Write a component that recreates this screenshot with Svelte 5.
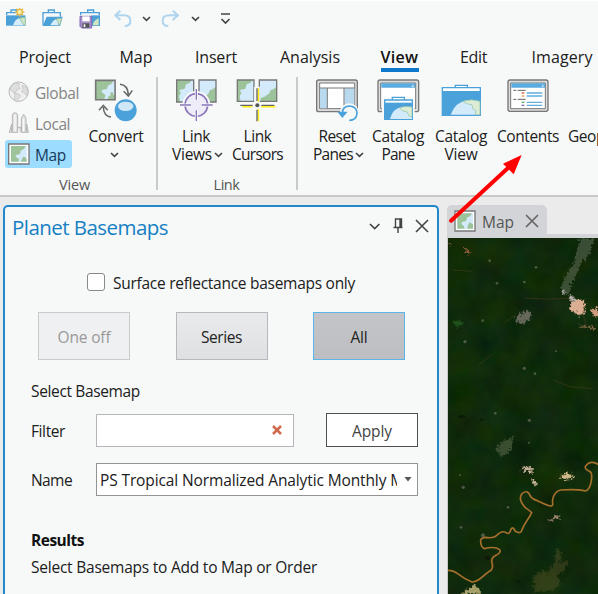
<script>
  const tabs = [
    ['Project', 53], ['Map', 34], ['Insert', 43], ['Analysis', 61],
    ['View', 39], ['Edit', 28], ['Imagery', 62]
  ];

  // Spreads the letters so that a label takes the given width,
  // less one pixel for the side bearings.
  function fit(node, width) {
    const natural = node.getBoundingClientRect().width;
    node.style.letterSpacing = `${(width - 1 - natural) / node.textContent.length}px`;
  }
</script>

{#snippet chevron()}
  <svg class="chev" viewBox="0 0 11 8"><path d="M2 2l3.5 3.3L9 2" /></svg>
{/snippet}

{#snippet greenMap(x, y, s)}
  <g transform="translate({x} {y}) scale({s})">
    <path d="M0 0h60v60H0z" fill="#d3eafb" />
    <path d="M0 0H55L50 10 38 17 35 27 22 29 17 33 23 40 30 45 29 52 24 60H0z" fill="#9cc39a" />
    <path d="M46 36l7 1 2 8 5 2v13H36l4-10 6-4z" fill="#9cc39a" />
    <path d="M0 0h60v60H0z" fill="none" stroke="#777" stroke-width="5" />
  </g>
{/snippet}

<div class="app">
  <div class="qat">
    <svg class="q" viewBox="15 24 66 66">
      <path d="M33 37v-7h17v7M20 45v-7h28" fill="none" stroke="#4ba0d8" stroke-width="4" />
      <path d="M18 46h58v31H18z" fill="#4ba0d8" />
      <path d="M39 76q6-20 21-22l14-2v24z" fill="#d8edfa" /><path d="M58 54l6 9 8 13h4V52z" fill="#cfe6c0" stroke="#78b497" stroke-width="2" />
      <g stroke="#e0b94c" stroke-width="4"><path d="M59 22v28M45 36h28M49 26l20 20M69 26L49 46" /><circle cx="59" cy="36" r="8" fill="#fff2a9" /></g>
    </svg>
    <svg class="q" viewBox="126 24 66 66">
      <path d="M145 37v-7h18v7M129 76V38h52v12" fill="none" stroke="#4ba0d8" stroke-width="4" />
      <path d="M140 50h48l-8 28h-52z" fill="#4ba0d8" />
      <path d="M151 76q7-16 20-20l14-2-6 22z" fill="#d8edfa" /><path d="M168 57l6 8 2 10h3l6-20z" fill="#cfe6c0" stroke="#78b497" stroke-width="2" />
    </svg>
    <svg class="q" viewBox="237 24 66 66">
      <path d="M263 37v-7h18v7M242 46v-8h56v8" fill="none" stroke="#4ba0d8" stroke-width="4" />
      <path d="M274 46h26v32h-26z" fill="#4ba0d8" /><path d="M278 76q2-14 18-21v21z" fill="#cfe6c0" />
      <path d="M240 49h35v35h-30l-5-5z" fill="#a58fc8" stroke="#8267b4" stroke-width="3" />
      <path d="M247 49h22v15h-22z" fill="#fff" /><path d="M247 70h21v13h-21z" fill="#555" /><path d="M251 73h5v8h-5z" fill="#fff" />
    </svg>
    <svg class="q undo" viewBox="339 24 66 66"><path d="M361 32l-15 14 15 14M347 46h24q20 0 20 16 0 16-17 16" /></svg>
    {@render chevron()}
    <svg class="q redo" viewBox="483 24 66 66"><path d="M518 32l16 14-16 14M533 46h-24q-21 0-21 16 0 16 17 16" /></svg>
    {@render chevron()}
    <svg class="more" viewBox="0 0 13 16"><path d="M2 3h9M2.500 8l4 4 4-4" /></svg>
  </div>

  <div class="tabs">
    {#each tabs as [name, width]}
      <div class="tab" class:active={name === 'View'}><span use:fit={width}>{name}</span></div>
    {/each}
  </div>

  <div class="ribbon">
    <div class="group view">
      <div class="row">
        <div class="smalls">
          <div class="small off">
            <svg viewBox="24 20 66 66">
              <circle cx="56" cy="52" r="29" fill="#f0f0f0" stroke="#b8b8b8" stroke-width="3" />
              <path d="M34 34l12-8 12 2-2 8 6 6-10 4-6 10-10-4-6-8zM44 56l14 4 4 6-8 8-2 8-8-4zM66 32l12 6 6 12-4 14-8-8-8-4 6-8z" fill="#dedede" stroke="#bcbcbc" stroke-width="2" />
            </svg><span use:fit={45}>Global</span>
          </div>
          <div class="small off">
            <svg viewBox="24 114 66 66">
              <path d="M28 175l7-25v25zM37 175v-52l4-6h8l4 6v52zM64 175v-42l7-12 7 12v42zM80 150l5 25h-5zM53 160h10v15" fill="#e2e2e2" stroke="#b5b5b5" stroke-width="3" />
              <path d="M45 122v50M71 134v38" stroke="#fff" stroke-width="3" />
            </svg><span use:fit={36}>Local</span>
          </div>
          <div class="small on">
            <svg viewBox="24 207 66 66">
              <path d="M26 210h61v60H26z" fill="#fff" stroke="#777" stroke-width="4" />
              <path d="M33 216h47v47H33z" fill="#d3eafb" />
              <path d="M33 216h44l-5 8-10 6-2 10-11 3-3 5 8 5 4 5-4 5H33zM70 248l6 2 4 6v7H62l4-8z" fill="#9cc39a" />
            </svg><span use:fit={32}>Map</span>
          </div>
        </div>
        <div class="big convert">
          <svg viewBox="282 12 132 132">
            {@render greenMap(287, 19, 0.97)}
            <path d="M360 31q23 2 25 30M371 52l14 14 12-17M333 129q-22-2-23-30M297 109l13-15 13 15" fill="none" stroke="#666" stroke-width="4.500" />
            <circle cx="377" cy="109" r="33" fill="#4ba1da" /><ellipse cx="377" cy="97" rx="23" ry="14" fill="#cfe7f7" />
          </svg>
          <span use:fit={56}>Convert</span>
          {@render chevron()}
        </div>
      </div>
      <div class="caption"><span use:fit={32}>View</span></div>
    </div>

    <div class="group link">
      <div class="row">
        <div class="big views">
          <svg viewBox="42 12 132 132">
            <path d="M50 18h51v66H50zM117 18h51v66h-51z" fill="#d3eafb" />
            <path d="M50 18h44l-4 8-12 5-4 13-16 4 4 10-5 8 4 18H50zM168 38l-10 8-8 2-4 10-10 10 4 16h28z" fill="#9cc39a" />
            <path d="M50 18h51v66H50zM117 18h51v66h-51z" fill="none" stroke="#777" stroke-width="4" />
            <circle cx="109" cy="93" r="42" fill="#f7f9f8" />
            <circle cx="109" cy="93" r="34" fill="#eeecf8" stroke="#8976b9" stroke-width="5" />
            <path d="M109 45v33M109 108v33M60 93h34M124 93h34" stroke="#f7f9f8" stroke-width="9" />
            <path d="M109 45v32M109 109v32M60 93h33M125 93h33" stroke="#8976b9" stroke-width="4" />
          </svg>
          <span use:fit={29}>Link</span>
          <div class="line"><span use:fit={41}>Views</span>{@render chevron()}</div>
        </div>
        <div class="big cursors">
          <svg viewBox="226 12 132 132">
            <path d="M230 18h50v64h-50zM296 18h52v64h-52z" fill="#d3eafb" />
            <path d="M230 18h44l-4 8-12 5-4 13-16 4 4 10-5 8 3 16h-10zM348 38l-10 8-8 2-4 10-14 10-12 4v10h48z" fill="#9cc39a" />
            <path d="M230 18h50v64h-50zM296 18h52v64h-52z" fill="none" stroke="#777" stroke-width="4" />
            <path d="M289 38v106M232 95h119" stroke="#f7f9f8" stroke-width="17" />
            <path d="M293 43v40M293 105v37M245 98h30M302 98h42" stroke="#ffef16" stroke-width="5" />
            <path d="M289 43v38M289 107v35M239 94h37M302 94h39" stroke="#666" stroke-width="4" />
            <circle cx="290" cy="94" r="6" fill="#555" />
          </svg>
          <span use:fit={29}>Link</span>
          <span use:fit={52}>Cursors</span>
        </div>
      </div>
      <div class="caption"><span use:fit={27}>Link</span></div>
    </div>

    <div class="group panes">
      <div class="row">
        <div class="big reset">
          <svg viewBox="33 12 132 132">
            <rect x="38" y="18" width="122" height="95" rx="6" fill="#ddd" stroke="#777" stroke-width="4" />
            <path d="M47 27h105v77H47z" fill="#fff" stroke="#777" stroke-width="3" />
            <path d="M48 43h21v60H48zM121 43h30v60h-30z" fill="#b9d9ef" />
            <path d="M47 42h105M70 42v62M120 42v62" stroke="#777" stroke-width="3" />
            <circle cx="136" cy="117" r="29" fill="#f7f9f8" />
            <path d="M115 118q0-22 22-22 22 2 22 22-2 21-23 21" fill="none" stroke="#4ba1da" stroke-width="5" />
            <path d="M100 113l15 19 16-19z" fill="#4ba1da" />
          </svg>
          <span use:fit={38}>Reset</span>
          <div class="line"><span use:fit={41}>Panes</span>{@render chevron()}</div>
        </div>
        <div class="big pane">
          <svg viewBox="216 12 132 132">
            <rect x="222" y="18" width="122" height="95" rx="6" fill="#ddd" stroke="#777" stroke-width="4" />
            <path d="M230 27h105v77H230z" fill="#fff" stroke="#777" stroke-width="3" />
            <path d="M232 28h102v13H232z" fill="#5aabe0" /><path d="M327 30l2 9h-6z" fill="#d8edfa" />
            <path d="M234 70h98v72h-98z" fill="#f7f9f8" />
            <path d="M265 78v-8h36v8M242 88V78h83v10" fill="#fff" stroke="#4ba1da" stroke-width="4" />
            <path d="M240 86h87v52h-87z" fill="#4ba1da" />
            <path d="M258 135q8-32 36-35l30-2v37z" fill="#d3eafb" />
            <path d="M286 101l10 10 14 3 5 12 9 3v-30q-20-4-38 2z" fill="#dcecd5" stroke="#8ac2a4" stroke-width="2" />
          </svg>
          <span use:fit={53}>Catalog</span>
          <span use:fit={34}>Pane</span>
        </div>
        <div class="big cview">
          <svg viewBox="-3 12 132 132">
            <path d="M46 40v-6h36v6M7 52V41h114v11" fill="#fff" stroke="#4ba1da" stroke-width="4" />
            <path d="M5 51h118v75H5z" fill="#4ba1da" />
            <path d="M32 122q14-38 50-44l38 4v40z" fill="#d3eafb" />
            <path d="M68 82l15 8 13 2 2 12 10 6-2 12h14V82q-26-9-52 0z" fill="#dcecd5" stroke="#8ac2a4" stroke-width="2" />
          </svg>
          <span use:fit={53}>Catalog</span>
          <span use:fit={34}>View</span>
        </div>
        <div class="big contents">
          <svg viewBox="198 12 132 132">
            <rect x="204" y="18" width="120" height="94" rx="6" fill="#ddd" stroke="#777" stroke-width="4" />
            <path d="M212 27h104v77H212z" fill="#fff" stroke="#777" stroke-width="3" />
            <path d="M214 28h101v13H214z" fill="#5aabe0" /><path d="M309 30l2 8h-6z" fill="#d8edfa" />
            <path d="M220 49h9M233 49h24M220 76h9M233 76h24" stroke="#666" stroke-width="3" />
            <path d="M260 57h47M260 66h47M260 85h47M260 94h47" stroke="#62aee0" stroke-width="4" />
            <path d="M245 57h8" stroke="#d65a39" stroke-width="4" /><path d="M245 66h8" stroke="#e49b4b" stroke-width="4" />
            <path d="M245 85h8" stroke="#59a868" stroke-width="4" /><path d="M245 94h8" stroke="#7c68b8" stroke-width="4" />
          </svg>
          <span use:fit={63}>Contents</span>
        </div>
        <div class="big geo"><span use:fit={38}>Geop</span></div>
      </div>
    </div>
  </div>

  <div class="work">
    <section class="dock">
      <header>
        <h1><span use:fit={157}>Planet Basemaps</span></h1>
        <svg class="tools" viewBox="0 0 66 20">
          <path d="M4 8l4.700 4.600L13.400 8" stroke-width="1.600" />
          <path d="M29.500 3h6v8.500h-6zM27.500 11.500h9M32 11.500v5.500" stroke-width="1.400" /><path d="M34.500 3v8" stroke-width="2.400" />
          <path d="M50 4l12 12M62 4L50 16" stroke-width="1.600" />
        </svg>
      </header>
      <label class="check"><i></i><span use:fit={243}>Surface reflectance basemaps only</span></label>
      <div class="modes">
        <button class="dis"><span use:fit={54}>One off</span></button>
        <button><span use:fit={42}>Series</span></button>
        <button class="sel"><span use:fit={18}>All</span></button>
      </div>
      <div class="select"><span use:fit={110}>Select Basemap</span></div>
      <div class="field filter">
        <div class="key"><span use:fit={35}>Filter</span></div>
        <div class="input"><svg viewBox="0 0 10 10"><path d="M1 1l8 8M9 1L1 9" /></svg></div>
        <button class="apply"><span use:fit={41}>Apply</span></button>
      </div>
      <div class="field name">
        <div class="key"><span use:fit={42}>Name</span></div>
        <div class="combo">
          <div class="value"><span use:fit={305}>PS Tropical Normalized Analytic Monthly M</span></div>
          <svg viewBox="0 0 8 5"><path d="M.5 0h7L4 4.500z" /></svg>
        </div>
      </div>
      <div class="results"><b use:fit={54}>Results</b></div>
      <div class="hint"><span use:fit={287}>Select Basemaps to Add to Map or Order</span></div>
    </section>

    <section class="doc">
      <div class="doctab">
        <svg class="mapicon" viewBox="43 407 66 66">
          <path d="M46 410h60v60H46z" fill="#fff" stroke="#777" stroke-width="4" />
          <path d="M53 417h47v46H53z" fill="#d3eafb" />
          <path d="M53 417h44l-5 8-10 5-3 10-12 3-2 6 7 5 3 9H53zM90 444l10 6v13H83l2-10z" fill="#9cc39a" />
        </svg>
        <span use:fit={33}>Map</span>
        <svg class="x" viewBox="0 0 14 14"><path d="M1 1l12 12M13 1L1 13" /></svg>
      </div>
      <div class="map">
        <svg width="150" height="356" viewBox="0 0 150 356">
          <defs>
            <filter id="forest" x="0" y="0" width="100%" height="100%" color-interpolation-filters="sRGB">
              <feTurbulence type="fractalNoise" baseFrequency=".035" numOctaves="6" seed="8" />
              <feColorMatrix values=".09 0 0 0 .015  .04 .08 0 0 .105  0 0 .09 0 -.005  0 0 0 0 1" />
            </filter>
            <filter id="rough" x="-5%" y="-5%" width="110%" height="110%" color-interpolation-filters="sRGB">
              <feTurbulence type="fractalNoise" baseFrequency=".12" numOctaves="2" seed="3" result="n" />
              <feDisplacementMap in="SourceGraphic" in2="n" scale="24" xChannelSelector="R" yChannelSelector="G" />
              <feGaussianBlur stdDeviation="2" />
            </filter>
          </defs>
          <rect width="150" height="356" fill="#0d260b" />
          <rect width="150" height="356" filter="url(#forest)" />
          <g transform="translate(-8 -8) scale(.33333)">
            <g filter="url(#rough)">
              <path d="M420 25h42l-8 38-34 42-22 52-16 38-22-10 20-56 20-26z" fill="#60705a" opacity=".55" />
              <path d="M230 260l25-18 16 4 4 18-26 16-22-6z" fill="#77736a" opacity=".85" />
              <path d="M166 660l20-25 34-14-8 38-26 24z" fill="#526344" opacity=".65" />
              <path d="M390 220l18-12 24 2 6 18-8 8 4 16-20 4-14-14-12-6z" fill="#dcae91" />
              <path d="M388 190l10 6 10 16-10 4-12-12zM360 186l10-8 8 10-8 4z" fill="#b4aca9" />
              <path d="M454 236l20-4v32l-16-6z" fill="#cf9c7f" />
              <path d="M412 284l24 6 24-2 6 12-10-4-20-2-24-2z" fill="#836b49" />
              <path d="M245 714l20-4 16 6-8 16-20-10zM272 744l12 6 6 18-12-6z" fill="#c6b298" />
              <path d="M360 740l18-8 4-10 6 12 16 2-8 10-22 2z" fill="#d1b78a" />
              <path d="M324 876l14-14 20-10 2 12-22 6z" fill="#a1886e" />
              <path d="M82 1078l18-14 20 12v16H60z" fill="#a7a06a" />
              <path d="M72 55l16 4 2 16-8-4zM25 35l10 3-5 12z" fill="#905e3d" />
              <path d="M280 1040l30-20 10 14 20-34 10-50 16 20-8 30 26-12-6 26-24 24 6 30-30 14-44 6z" fill="#6d6037" opacity=".35" />
              <path d="M35 270l30 4 4 14-20 2z" fill="#245e20" opacity=".8" />
            </g>
            <path d="M252 204q70 6 136 1M190 280l38-26M116 405l40-32M340 450l50 20 70 6M40 120l58 4M430 255l10 35" fill="none" stroke="#704b2a" stroke-width="2" opacity=".5" />
            <g fill="#8b8781" opacity=".5"><circle cx="149" cy="92" r="4" /><circle cx="171" cy="160" r="4" /><circle cx="253" cy="156" r="4" /><circle cx="128" cy="272" r="4" /><circle cx="75" cy="335" r="5" /><circle cx="348" cy="364" r="3" /><circle cx="253" cy="415" r="5" /><circle cx="285" cy="431" r="4" /><circle cx="268" cy="571" r="5" /><circle cx="267" cy="638" r="3" /><circle cx="70" cy="772" r="5" /><circle cx="60" cy="735" r="3" /><circle cx="129" cy="916" r="6" /><circle cx="63" cy="892" r="4" /><circle cx="166" cy="550" r="4" /><circle cx="288" cy="112" r="4" /><circle cx="204" cy="832" r="4" /></g>
            <g fill="#071207" opacity=".6"><ellipse cx="142" cy="984" rx="8" ry="6" /><ellipse cx="65" cy="560" rx="12" ry="4" /><circle cx="125" cy="569" r="4" /><circle cx="235" cy="1055" r="4" /></g>
            <path d="M20 1021Q40 1020 56 1033T96 1056Q110 1056 128 1040T154 1020Q160 1012 156 998T168 976Q184 968 179 959Q165 948 133 956Q121 950 122 930Q126 922 136 922Q162 926 170 916Q186 900 198 908Q206 914 210 906Q216 882 226 904Q240 912 244 904Q252 884 262 870T275 848Q267 840 255 832Q232 806 247 790Q263 778 270 796Q274 806 292 812Q312 822 330 828Q340 828 338 820Q336 808 342 796Q350 782 362 780Q412 777 436 783Q450 780 454 752Q458 726 448 724Q434 716 436 710Q444 696 458 697Q470 698 480 708" fill="none" stroke="#a56f2c" stroke-width="5" stroke-linejoin="round" />
          </g>
        </svg>
      </div>
    </section>
  </div>

  <svg class="arrow" viewBox="0 0 474 510">
    <path d="M33 440L208 278" stroke="#f00" stroke-width="12" stroke-linecap="round" />
    <path d="M245 243l-56 26 32 32z" fill="#f00" />
  </svg>
</div>

<style>
  :global(body) { margin: 0; }
  .app {
    position: relative; width: 598px; height: 594px; overflow: hidden;
    display: flex; flex-direction: column; background: #f7f9f8; color: #202020;
    font-family: "Open Sans", "Noto Sans", sans-serif; font-size: 15.500px;
  }
  .app * { box-sizing: border-box; }
  svg { display: block; flex: none; }
  span, b { display: inline-block; white-space: nowrap; flex: none; }

  .chev { width: 11px; height: 8px; }
  .chev path { fill: none; stroke: #444; stroke-width: 1.700; }

  .qat { height: 36px; flex: none; display: flex; align-items: center; padding: 1px 0 0 5px; border-top: 1px solid #fff; }
  .q { width: 22px; height: 22px; margin-right: 15px; }
  .q:nth-child(3) { margin-right: 12px; }
  .undo, .redo { fill: none; stroke: #aed4ef; stroke-width: 6; }
  .q.undo { margin-right: 6px; }
  .q.redo { margin: 0 7px 0 9px; }
  .more { width: 13px; height: 16px; margin-left: 18px; fill: none; stroke: #444; stroke-width: 1.700; }

  .tabs { height: 41px; flex: none; display: flex; }
  .tab { width: 90px; flex: none; display: flex; justify-content: center; height: 36px; line-height: 42px; font-size: 16px; }
  .tab:nth-child(2) { width: 92px; }
  .tab:nth-child(3) { width: 68px; }
  .tab:nth-child(4) { width: 120px; }
  .tab:nth-child(5) { width: 59px; }
  .tab:nth-child(6) { width: 89px; }
  .tab:nth-child(7) { width: 88px; }
  .tab.active { font-weight: 600; color: #111; }
  .tab.active span { border-bottom: 4px solid #0d78cc; height: 36px; }

  .ribbon { height: 120px; flex: none; display: flex; border-bottom: 2px solid #c9c9c9; }
  .group { height: 113px; flex: none; display: flex; flex-direction: column; justify-content: space-between; }
  .view { width: 158px; border-right: 2px solid #c9cbca; }
  .link { width: 140px; border-right: 2px solid #c9cbca; }
  .panes { width: 310px; }
  .row { display: flex; padding-top: 1px; }
  .smalls { width: 72px; padding-left: 5px; display: flex; flex-direction: column; gap: 3px; }
  .small { height: 28px; width: 67px; display: flex; align-items: center; gap: 5px; padding: 0 0 0 3px; border-radius: 3px; line-height: 28px; }
  .small svg { width: 22px; height: 22px; }
  .small span { padding-top: 1px; }
  .off { color: #858585; }
  .on { background: #9cdcff; color: #173a58; }
  .big { display: flex; flex-direction: column; align-items: center; line-height: 18px; flex: none; }
  .big > svg:first-child { width: 44px; height: 44px; margin-bottom: 5px; }
  .convert { width: 88px; }
  .convert .chev { margin-top: 6px; margin-right: 3px; }
  .views { width: 68px; margin-left: 4px; }
  .cursors { width: 55px; }
  .reset { width: 58px; margin-left: 10px; }
  .pane { width: 64px; }
  .cview { width: 62px; }
  .contents { width: 72px; }
  .geo { width: 40px; padding: 49px 0 0 4px; align-items: flex-start; }
  .line { display: flex; align-items: center; padding-left: 4px; gap: 1px; }
  .line .chev { margin-top: 2px; }
  .caption { text-align: center; font-size: 14.500px; line-height: 16px; color: #555; height: 13px; padding-right: 7px; }
  .link .caption { padding-right: 1px; }

  .work { flex: 1; min-height: 0; display: flex; background: #ebebeb; padding-top: 8px; }
  .dock { width: 436px; margin-left: 3px; flex: none; border: 2px solid #2388ca; border-bottom: 0; border-radius: 5px 5px 0 0; background: #f7f9f8; padding: 0 19px 0 26px; }
  header { display: flex; justify-content: space-between; align-items: center; height: 41px; margin: 0 -12px 0 -19px; }
  h1 { margin: -1px 0 0; font-size: 20.500px; font-weight: 400; line-height: 28px; color: #1680c4; }
  .tools { width: 66px; height: 20px; margin: -4px -2px 0 0; fill: none; stroke: #444; }
  .check { display: flex; align-items: center; margin: 23px 0 0 56px; height: 24px; gap: 8px; }
  .check i { width: 18px; height: 18px; border: 1.500px solid #888; border-radius: 3px; background: #fff; margin-top: -2px; }
  .modes { display: flex; justify-content: space-between; margin: 17px 13px 0 7px; }
  button { width: 92px; height: 48px; padding: 1px 0 0; font: inherit; color: #222; border: 1.500px solid #b5b8bc; background: linear-gradient(#e9eaeb, #dfe0e1); }
  .dis { color: #999; border-color: #c9cccf; background: #eff0f1; }
  .sel { border-color: #5cb5e9; background: linear-gradient(#c4c5c8, #bdbec1); }
  .select { margin-top: 19px; line-height: 24px; }
  .field { display: flex; align-items: center; }
  .key { width: 65px; line-height: 24px; }
  .filter { height: 34px; margin-top: 10px; }
  .filter .key { padding-top: 1px; }
  .input { width: 198px; height: 33px; border: 1.500px solid #b5b6bc; background: #fff; display: flex; align-items: center; justify-content: flex-end; padding-right: 11px; }
  .input svg { width: 10px; height: 10px; stroke: #d0694b; stroke-width: 2.500; }
  .apply { width: 92px; height: 34px; margin-left: 32px; background: #fff; border: 1.500px solid #505050; color: #444; }
  .name { margin-top: 16px; height: 33px; }
  .combo { width: 322px; height: 33px; border: 1.500px solid #949494; background: #fff; display: flex; align-items: center; padding-left: 3px; }
  .value { width: 297px; overflow: hidden; line-height: 28px; }
  .combo svg { width: 8px; height: 5px; margin-left: 7px; fill: #555; }
  .results { margin-top: 32px; line-height: 24px; color: #111; }
  .hint { margin-top: 3px; line-height: 24px; }

  .doc { width: 151px; margin-left: 8px; flex: none; display: flex; flex-direction: column; }
  .doctab { width: 100px; height: 29px; display: flex; align-items: center; background: #d3d4d8; border-radius: 5px 5px 0 0; padding: 3px 0 0 7px; color: #555; }
  .mapicon { width: 22px; height: 22px; }
  .doctab span { margin-left: 6px; line-height: 26px; padding-top: 1px; }
  .x { width: 14px; height: 14px; margin-left: 11px; stroke: #666; stroke-width: 1.700; }
  .map { border-top: 4px solid #d3d4d8; border-left: 1px solid #c9cacd; }
  .arrow { position: absolute; left: 440px; top: 74px; width: 158px; height: 170px; fill: none; }
</style>
